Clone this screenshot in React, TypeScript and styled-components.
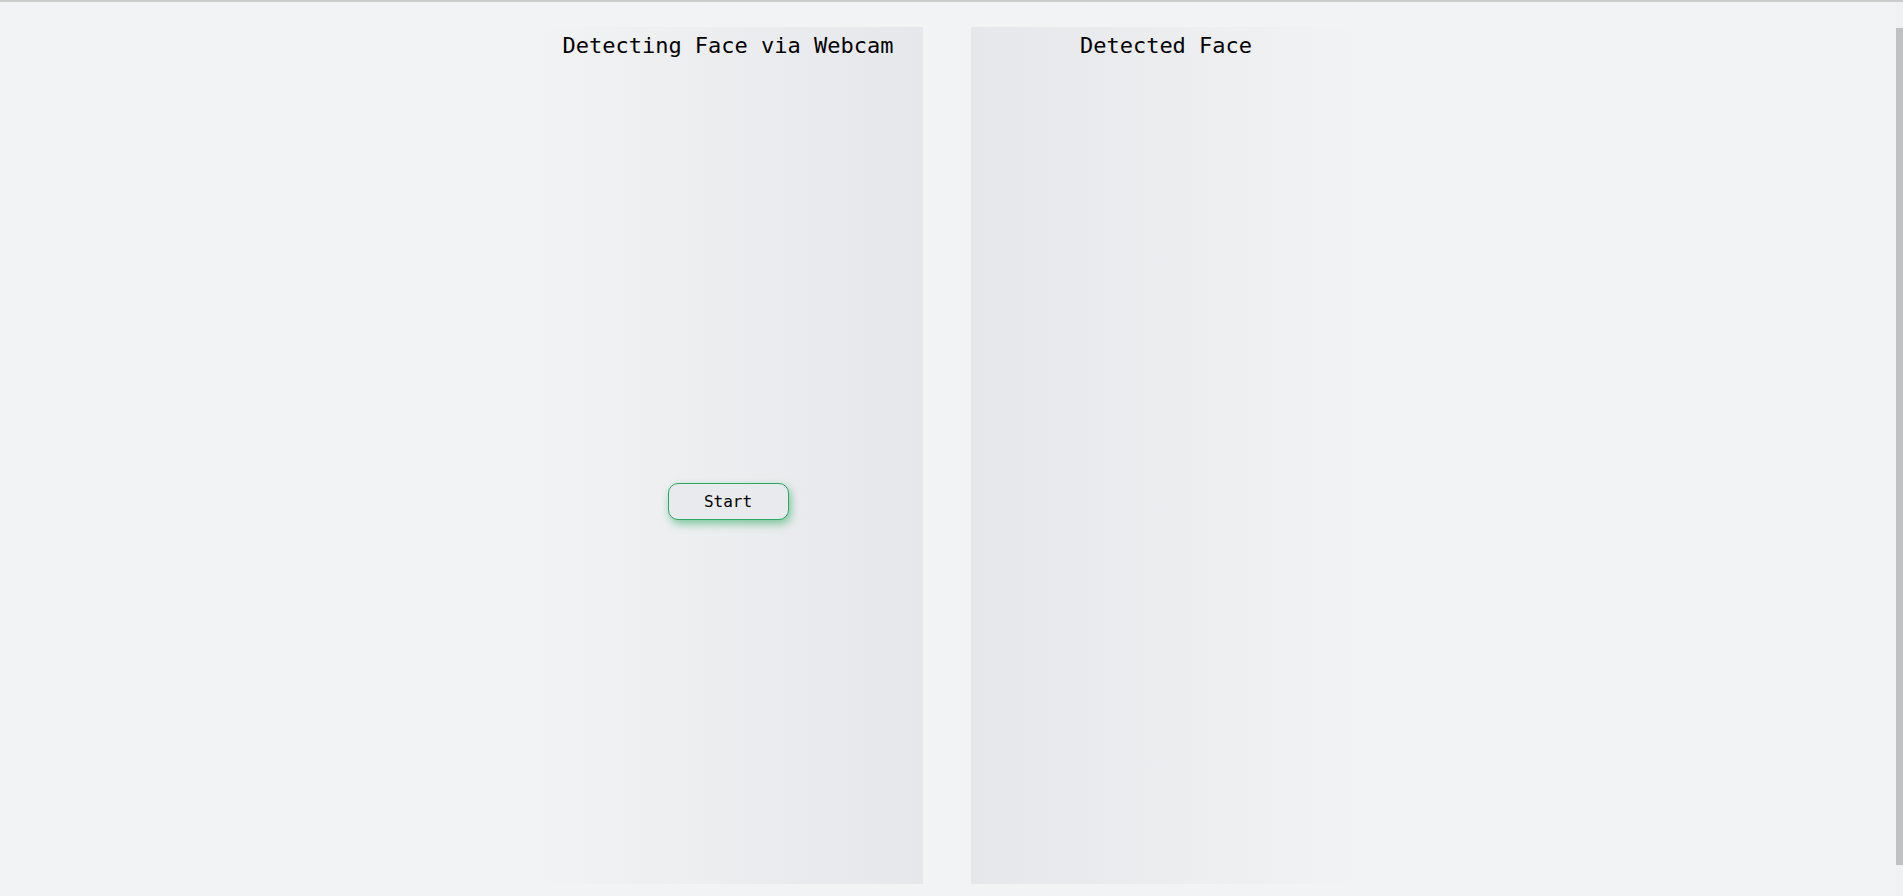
import React from 'react'
import styled, {createGlobalStyle} from 'styled-components'

const GlobalStyle = createGlobalStyle`
  html, body {
    margin: 0;
    padding: 0;
    height: 100%;
    overflow: hidden;
    background: #f2f3f5;
  }
  body {
    font-family: "DejaVu Sans Mono", "Liberation Mono", monospace;
    color: #000;
  }
`

const Frame = styled.div`
  display: flex;
  flex-direction: column;
  height: 100vh;
  border-top: 2px solid #cbcccc;
  box-sizing: border-box;
`

const Body = styled.div`
  display: flex;
  flex: 1;
  min-height: 0;
`

const Scroller = styled.div`
  flex: 1;
  overflow-y: auto;
  scrollbar-width: none;
  background: #f2f3f5;
  &::-webkit-scrollbar {
    display: none;
  }
`

// hand-drawn window scrollbar, the headless browser does not paint one
const Rail = styled.div`
  display: flex;
  flex-direction: column;
  width: 7px;
  padding: 26px 0 31px;
  box-sizing: border-box;
  background: #f1f1f1;
`

const Thumb = styled.div`
  flex: 1;
  background: #c1c1c1;
`

const Columns = styled.div`
  display: flex;
  justify-content: center;
  gap: 48px;
  padding: 25px 2px 20px 0;
`

const Panel = styled.section<{$side: 'left' | 'right'}>`
  display: flex;
  flex-direction: column;
  align-items: center;
  width: 390px;
  height: 857px;
  box-sizing: border-box;
  padding-top: 6px;
  background: linear-gradient(
    ${(p) => (p.$side === 'left' ? 'to right' : 'to left')},
    rgba(230, 231, 234, 0) 0%,
    #e6e7ea 100%
  );
`

const Title = styled.h2`
  margin: 0;
  font-size: 22px;
  font-weight: 400;
  line-height: 25.6px;
  text-align: center;
`

const Stage = styled.div`
  display: flex;
  justify-content: center;
  padding-top: 424px;
`

const StartButton = styled.button`
  width: 121px;
  height: 37px;
  border: 1px solid #2aa860;
  border-radius: 10px;
  background: #e9eaed;
  font-family: "DejaVu Sans Mono", "Liberation Mono", monospace;
  font-size: 16px;
  color: #000;
  cursor: pointer;
  box-shadow: 2px 4px 8px rgba(34, 170, 90, 0.55);
`

const App: React.FC = () => {
  return (
    <>
      <GlobalStyle />
      <Frame>
        <Body>
          <Scroller>
            <Columns>
              <Panel $side="left">
                <Title>Detecting Face via Webcam</Title>
                <Stage>
                  <StartButton>Start</StartButton>
                </Stage>
              </Panel>
              <Panel $side="right">
                <Title>Detected Face</Title>
              </Panel>
            </Columns>
          </Scroller>
          <Rail>
            <Thumb />
          </Rail>
        </Body>
      </Frame>
    </>
  )
}

export default App
